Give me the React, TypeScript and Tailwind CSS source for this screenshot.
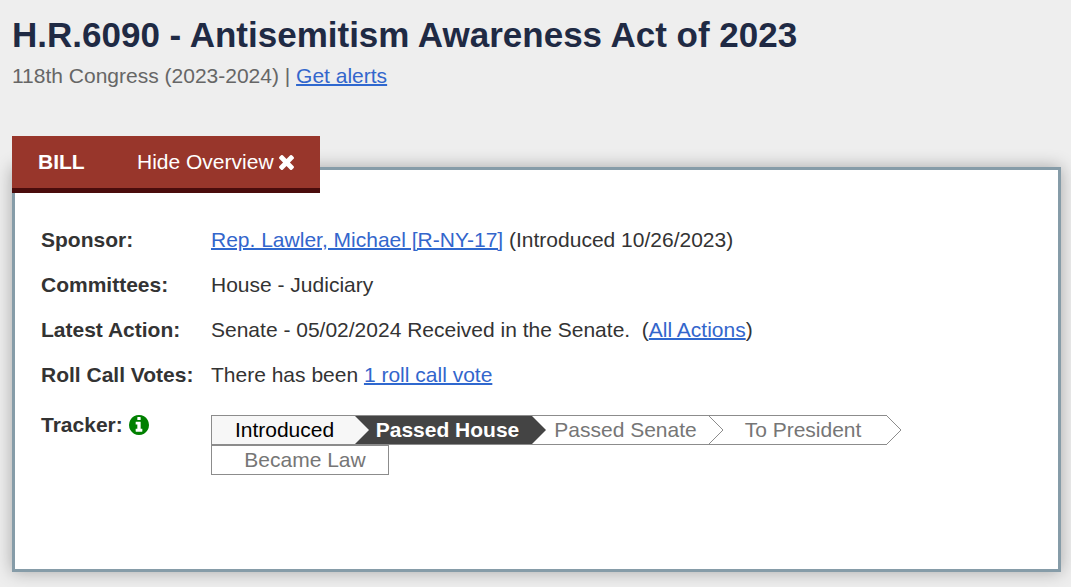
import type { ReactNode } from "react";

function BillLink({ children }: { children: ReactNode }) {
  return (
    <a href="#" className="text-[#3366cc] underline decoration-[#2f68cf] decoration-2">
      {children}
    </a>
  );
}

function CloseIcon() {
  return (
    <svg viewBox="302 366 1188 1188" className="size-[15px]" fill="currentColor" aria-hidden="true">
      <path d="M1490 1322q0 40-28 68l-136 136q-28 28-68 28t-68-28l-294-294-294 294q-28 28-68 28t-68-28l-136-136q-28-28-28-68t28-68l294-294-294-294q-28-28-28-68t28-68l136-136q28-28 68-28t68 28l294 294 294-294q28-28 68-28t68 28l136 136q28 28 28 68t-28 68l-294 294 294 294q28 28 28 68z" />
    </svg>
  );
}

function InfoIcon() {
  return (
    <svg viewBox="128 128 1536 1536" className="size-5" fill="currentColor" aria-hidden="true">
      <path d="M1152 1376v-160q0-14-9-23t-23-9h-96v-512q0-14-9-23t-23-9h-320q-14 0-23 9t-9 23v160q0 14 9 23t23 9h96v320h-96q-14 0-23 9t-9 23v160q0 14 9 23t23 9h448q14 0 23-9t9-23zm-128-896v-160q0-14-9-23t-23-9h-192q-14 0-23 9t-9 23v160q0 14 9 23t23 9h192q14 0 23-9t9-23zm640 416q0 209-103 385.5t-279.5 279.5-385.5 103-385.5-103-279.5-279.5-103-385.5 103-385.5 279.5-279.5 385.5-103 385.5 103 279.5 279.5 103 385.5z" />
    </svg>
  );
}

// Point on the right edge of a tracker step, drawn over the start of the next one
function StepArrow({ className }: { className: string }) {
  return (
    <svg
      viewBox="0 0 15 28"
      className={`absolute top-0 left-full z-10 h-7 w-[15px] ${className}`}
      aria-hidden="true"
    >
      <path d="M0 0L14 14L0 28" />
    </svg>
  );
}

const steps = [
  {
    label: "Introduced",
    item: "w-36 border-l bg-[#f7f7f7] pl-0.5 text-black",
    arrow: "fill-[#f7f7f7] stroke-none",
  },
  {
    label: "Passed House",
    item: "w-[177px] bg-[#444444] pl-2 font-bold text-white",
    arrow: "fill-[#444444] stroke-none",
  },
  {
    label: "Passed Senate",
    item: "w-[177px] bg-white pl-2.5 text-[#767676]",
    arrow: "fill-white stroke-[#8c8c8c]",
  },
  {
    label: "To President",
    item: "w-[178px] bg-white pl-2.5 text-[#767676]",
    arrow: "fill-white stroke-[#8c8c8c]",
  },
  {
    label: "Became Law",
    item: "w-[178px] border-x bg-white pl-2.5 text-[#767676]",
    arrow: "",
  },
];

function Tracker() {
  return (
    <ol className="flex max-w-[700px] flex-wrap">
      {steps.map((step) => (
        <li
          key={step.label}
          className={`relative h-[30px] border-y border-[#8c8c8c] text-center leading-7 ${step.item}`}
        >
          {step.label}
          {step.arrow && <StepArrow className={step.arrow} />}
        </li>
      ))}
    </ol>
  );
}

function Row({ label, children }: { label: string; children: ReactNode }) {
  return (
    <tr>
      <th scope="row" className="w-[170px] pb-[15px] text-left align-top font-bold">
        {label}
      </th>
      <td className="pb-[15px] align-top">{children}</td>
    </tr>
  );
}

export default function App() {
  return (
    <div className="min-h-screen bg-[#eeeeee] pt-3 pr-2.5 pb-4 pl-3 font-['Liberation_Sans',Arial,sans-serif] text-[21px] leading-[30px] text-[#333333]">
      <header>
        <h1 className="text-[35px] leading-[46px] font-bold text-[#1f2a44]">
          H.R.6090 - Antisemitism Awareness Act of 2023
        </h1>
        <p className="mt-[3px] text-[#666666]">
          118th Congress (2023-2024) | <BillLink>Get alerts</BillLink>
        </p>
      </header>

      <main className="mt-[45px]">
        <div className="relative z-10 -mb-[26px] flex h-[57px] w-[308px] items-center border-b-[5px] border-[#4a0c0c] bg-[#98362b] pl-[26px] text-white">
          <h2 className="w-[99px] font-bold">BILL</h2>
          <button type="button" className="flex items-center gap-[5px]">
            Hide Overview
            <CloseIcon />
          </button>
        </div>

        <section className="min-h-[405px] border-[3px] border-[#869ca8] bg-white px-[26px] pt-[55px] shadow-[0_0_16px_rgba(0,0,0,0.3)]">
          <table className="w-full">
            <tbody>
              <Row label="Sponsor:">
                <BillLink>Rep. Lawler, Michael [R-NY-17]</BillLink> (Introduced 10/26/2023)
              </Row>
              <Row label="Committees:">House - Judiciary</Row>
              <Row label="Latest Action:">
                Senate - 05/02/2024 Received in the Senate.&nbsp; (<BillLink>All Actions</BillLink>)
              </Row>
              <Row label="Roll Call Votes:">
                There has been <BillLink>1 roll call vote</BillLink>
              </Row>
              <tr>
                <th scope="row" className="pt-[5px] text-left align-top font-bold">
                  <div className="flex items-center gap-1.5">
                    Tracker:
                    <button type="button" aria-label="About the tracker" className="text-[#008000]">
                      <InfoIcon />
                    </button>
                  </div>
                </th>
                <td className="pt-2.5 align-top">
                  <Tracker />
                </td>
              </tr>
            </tbody>
          </table>
        </section>
      </main>
    </div>
  );
}
